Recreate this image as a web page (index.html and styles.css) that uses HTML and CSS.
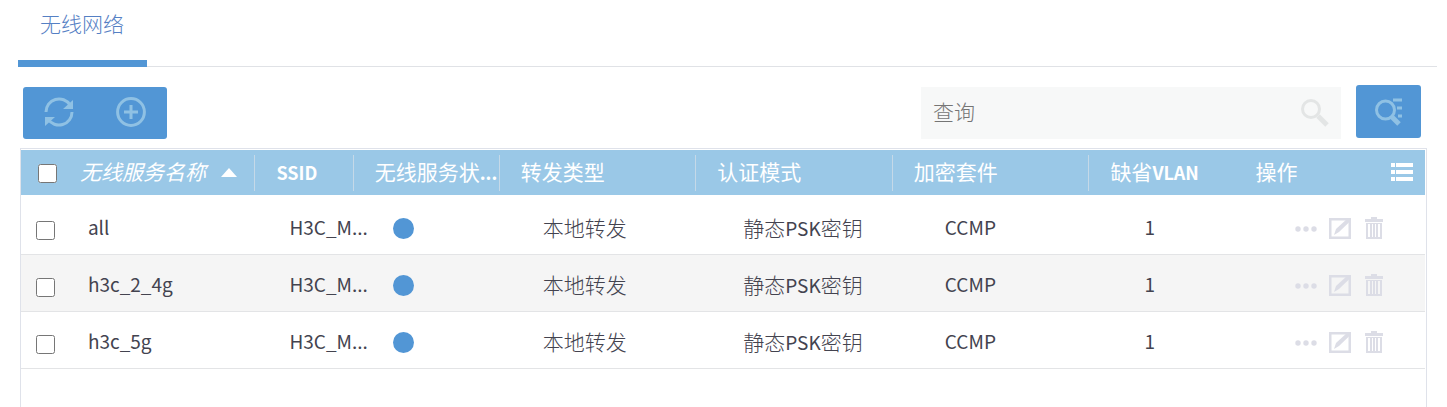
FILE: index.html
```html
<!DOCTYPE html>
<html lang="zh-CN">
<head>
    <meta charset="UTF-8">
    <meta name="viewport" content="width=device-width, initial-scale=1.0">
    <title>无线网络</title>
    <link rel="stylesheet" href="styles.css">
</head>
<body>
    <!-- shared icons -->
    <svg class="sprite" aria-hidden="true">
        <symbol id="icon-more" viewBox="0 0 24 24">
            <circle cx="4" cy="12" r="2.7"/><circle cx="12" cy="12" r="2.7"/><circle cx="20" cy="12" r="2.7"/>
        </symbol>
        <symbol id="icon-edit" viewBox="0 0 24 24">
            <path fill-rule="evenodd" d="M1 1h22v21H1zM3.500 3.500v16h17v-16z"/>
            <path d="M20 1l3 2.500L11 15l-5 3 2-6z"/>
        </symbol>
        <symbol id="icon-delete" viewBox="0 0 24 24">
            <path d="M9 2V0h6v2h6v3H3V2z"/>
            <path fill-rule="evenodd" d="M4 6h16v16H4zM6 7v13h2V7zM10 7v13h1V7zM13 7v13h1V7zM16 7v13h2V7z"/>
        </symbol>
    </svg>

    <nav class="tabs">
        <a class="tab active" href="#">无线网络</a>
    </nav>

    <div class="toolbar">
        <div class="btn-group">
            <button class="btn" type="button" aria-label="刷新">
                <svg class="icon-lg" viewBox="0 0 32 32" fill="none" stroke="currentColor" stroke-width="3">
                    <path d="M3 15A13 13 0 0 1 27 8"/>
                    <path d="M29 15A13 13 0 0 1 5 22"/>
                    <path fill="currentColor" stroke="none" d="M30 3v9h-10zM2 20h10L2 29z"/>
                </svg>
            </button>
            <button class="btn" type="button" aria-label="添加">
                <svg class="icon-lg" viewBox="0 0 32 32" fill="none" stroke="currentColor" stroke-width="3">
                    <circle cx="16" cy="15" r="13.4"/>
                    <path d="M16 8v14M9 15h14"/>
                </svg>
            </button>
        </div>
        <div class="search">
            <input class="search-input" type="text" placeholder="查询" aria-label="查询">
            <svg class="search-icon" viewBox="0 0 28 28" fill="none" stroke="currentColor">
                <circle cx="10" cy="10" r="8.500" stroke-width="3"/>
                <path stroke-width="5" d="M17 17l9 9"/>
            </svg>
        </div>
        <button class="btn advanced" type="button" aria-label="高级查询">
            <svg class="icon-md" viewBox="0 0 28 28" fill="none" stroke="currentColor" stroke-width="3">
                <circle cx="10.500" cy="12" r="9"/>
                <path stroke-width="5" d="M16 18l8 8"/>
                <path d="M18 2h9M22 10h5M23 18h4"/>
            </svg>
        </button>
    </div>

    <div class="grid">
        <table class="grid-table">
            <colgroup>
                <col class="col-check">
                <col class="col-wide">
                <col class="col-ssid">
                <col class="col-mid">
                <col class="col-wide">
                <col class="col-wide">
                <col class="col-wide">
                <col class="col-mid">
                <col>
            </colgroup>
            <thead>
                <tr>
                    <th class="check"><input type="checkbox" aria-label="全选"></th>
                    <th><div class="head sorted"><em>无线服务名称</em><span class="sort-arrow"></span></div></th>
                    <th><div class="head"><b>SSID</b></div></th>
                    <th><div class="head">无线服务状<b>...</b></div></th>
                    <th><div class="head">转发类型</div></th>
                    <th><div class="head">认证模式</div></th>
                    <th><div class="head">加密套件</div></th>
                    <th><div class="head last">缺省<b>VLAN</b></div></th>
                    <th>
                        <div class="head actions-head">
                            操作
                            <button class="columns-btn" type="button" aria-label="选择列">
                                <svg class="icon-sm" viewBox="0 0 24 24">
                                    <path d="M1 4h4v4H1zM6 4h17v4H6zM1 11h4v4H1zM6 11h17v4H6zM1 18h4v4H1zM6 18h17v4H6z"/>
                                </svg>
                            </button>
                        </div>
                    </th>
                </tr>
            </thead>
            <tbody>
                <tr>
                    <td class="check"><input type="checkbox" aria-label="all"></td>
                    <td class="name latin">all</td>
                    <td class="ssid latin">H3C_M...</td>
                    <td class="status"><span class="dot"></span></td>
                    <td class="forward">本地转发</td>
                    <td class="auth">静态<span class="latin">PSK</span>密钥</td>
                    <td class="cipher latin">CCMP</td>
                    <td class="vlan latin">1</td>
                    <td>
                        <div class="actions">
                            <button class="action" type="button" aria-label="更多"><svg class="icon-sm"><use href="#icon-more"/></svg></button>
                            <button class="action" type="button" aria-label="编辑"><svg class="icon-sm"><use href="#icon-edit"/></svg></button>
                            <button class="action" type="button" aria-label="删除"><svg class="icon-sm"><use href="#icon-delete"/></svg></button>
                        </div>
                    </td>
                </tr>
                <tr>
                    <td class="check"><input type="checkbox" aria-label="h3c_2_4g"></td>
                    <td class="name latin">h3c_2_4g</td>
                    <td class="ssid latin">H3C_M...</td>
                    <td class="status"><span class="dot"></span></td>
                    <td class="forward">本地转发</td>
                    <td class="auth">静态<span class="latin">PSK</span>密钥</td>
                    <td class="cipher latin">CCMP</td>
                    <td class="vlan latin">1</td>
                    <td>
                        <div class="actions">
                            <button class="action" type="button" aria-label="更多"><svg class="icon-sm"><use href="#icon-more"/></svg></button>
                            <button class="action" type="button" aria-label="编辑"><svg class="icon-sm"><use href="#icon-edit"/></svg></button>
                            <button class="action" type="button" aria-label="删除"><svg class="icon-sm"><use href="#icon-delete"/></svg></button>
                        </div>
                    </td>
                </tr>
                <tr>
                    <td class="check"><input type="checkbox" aria-label="h3c_5g"></td>
                    <td class="name latin">h3c_5g</td>
                    <td class="ssid latin">H3C_M...</td>
                    <td class="status"><span class="dot"></span></td>
                    <td class="forward">本地转发</td>
                    <td class="auth">静态<span class="latin">PSK</span>密钥</td>
                    <td class="cipher latin">CCMP</td>
                    <td class="vlan latin">1</td>
                    <td>
                        <div class="actions">
                            <button class="action" type="button" aria-label="更多"><svg class="icon-sm"><use href="#icon-more"/></svg></button>
                            <button class="action" type="button" aria-label="编辑"><svg class="icon-sm"><use href="#icon-edit"/></svg></button>
                            <button class="action" type="button" aria-label="删除"><svg class="icon-sm"><use href="#icon-delete"/></svg></button>
                        </div>
                    </td>
                </tr>
            </tbody>
        </table>
    </div>
</body>
</html>
```
FILE: styles.css
```css
* { box-sizing: border-box; }
body { margin: 0; min-height: 100vh; display: flex; flex-direction: column; background: #fff; color: #43434f; font-family: "Noto Sans CJK SC", sans-serif; font-size: 21px; font-weight: 300; line-height: 30px; }
button, input { font: inherit; margin: 0; }
button { padding: 0; border: none; background: none; cursor: pointer; }
svg { display: block; }
.sprite { display: none; }
.latin { font-size: 19px; font-weight: 400; }

.tabs { display: flex; height: 67px; margin: 0 10px 0 18px; box-shadow: inset 0 -1px #e0e2e6; }
.tab { padding: 8px 23px 0 22px; border-bottom: 7px solid transparent; color: #5580c4; text-decoration: none; }
.tab.active { border-bottom-color: #5296d5; }

.toolbar { display: flex; align-items: flex-start; padding: 18px 26px 9px 23px; }
.btn-group { display: flex; margin-top: 2px; border-radius: 3px; background: #5296d5; }
.btn { display: flex; align-items: center; justify-content: center; width: 72px; height: 52px; color: #8fc1e4; }
.advanced { width: 65px; height: 53px; border-radius: 3px; background: #5296d5; }
.icon-lg { width: 32px; height: 32px; }
.icon-md { width: 28px; height: 28px; }
.icon-sm { width: 24px; height: 24px; fill: currentColor; }
.search { display: flex; align-items: center; width: 420px; height: 52px; margin: 2px 15px 0 auto; padding: 0 12px; background: #f7f8f8; }
.search-input { flex: 1; min-width: 0; padding: 0 0 4px; border: none; outline: none; background: none; }
.search-input::placeholder { color: #757575; }
.search-icon { width: 28px; height: 28px; color: #e3e5e5; }

.grid { flex: 1; margin: 0 20px; padding: 1px 1px 0 0; border: 1px solid #dfe2ea; border-bottom: none; }
.grid-table { width: 100%; table-layout: fixed; border-collapse: separate; border-spacing: 0; }
.col-check { width: 2.7%; }
.col-wide { width: 14%; }
.col-mid { width: 10.4%; }
.col-ssid { width: 7%; }

th { height: 45px; padding: 0; background: #9ac8e7; color: #fff; font-weight: 400; text-align: left; }
th b { font-size: 18px; font-weight: 700; }
.head { height: 36px; padding-left: 21px; border-right: 1px solid #c5d9e8; line-height: 32px; white-space: nowrap; overflow: hidden; }
.head.last { border-right: none; }
.sorted { display: flex; align-items: center; gap: 15px; padding-bottom: 4px; }
.sort-arrow { margin-top: 4px; border: 8px solid transparent; border-top: none; border-bottom: 9px solid #fff; }
.actions-head { display: flex; align-items: center; justify-content: space-between; padding: 0 11px 4px 20px; border-right: none; }
.columns-btn { color: #fff; }

td { height: 57px; padding: 2px 0 0; border-bottom: 1px solid #e3e4e6; white-space: nowrap; }
tbody tr:first-child td { height: 60px; border-top: 3px solid #fff; }
tbody tr:nth-child(even) { background: #f5f5f5; }
input[type="checkbox"] { display: block; width: 19px; height: 19px; }
th.check { padding: 2px 0 0 17px; }
td.check { padding: 9px 0 0 15px; }
td.name { padding-left: 29px; }
td.ssid { padding-left: 34px; }
td.status { padding: 5px 0 0 39px; }
td.forward { padding-left: 43px; }
td.auth { padding-left: 47px; }
td.cipher { padding-left: 52px; }
td.vlan { padding-left: 55px; }
.dot { display: block; width: 21px; height: 21px; border-radius: 50%; background: #5296d5; }
.actions { display: flex; justify-content: flex-end; gap: 10px; padding: 3px 39px 0 0; }
.action { color: #dcdde6; }
```
